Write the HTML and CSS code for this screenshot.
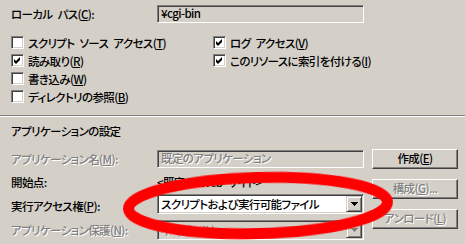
FILE: index.html
```html
<!DOCTYPE html>
<html lang="ja">
<head>
<meta charset="utf-8">
<link rel="stylesheet" href="styles.css">
</head>
<body>
<div class="page">
  <div class="path-row">
    <span class="label">ローカル パス(<u>C</u>):</span>
    <div class="field">¥cgi-bin</div>
  </div>

  <div class="checks">
    <div class="check"><span class="box"></span><span>スクリプト ソース アクセス(<u>T</u>)</span></div>
    <div class="check"><span class="box"><svg viewBox="0 0 11 11" class="tick"><path d="M2 4 L4 6 L8 2 L8 5 L4 9 L2 7 Z"/></svg></span><span>ログ アクセス(<u>V</u>)</span></div>
    <div class="check"><span class="box"><svg viewBox="0 0 11 11" class="tick"><path d="M2 4 L4 6 L8 2 L8 5 L4 9 L2 7 Z"/></svg></span><span>読み取り(<u>R</u>)</span></div>
    <div class="check"><span class="box"><svg viewBox="0 0 11 11" class="tick"><path d="M2 4 L4 6 L8 2 L8 5 L4 9 L2 7 Z"/></svg></span><span>このリソースに索引を付ける(<u>I</u>)</span></div>
    <div class="check"><span class="box"></span><span>書き込み(<u>W</u>)</span></div>
    <div class="check empty"></div>
    <div class="check"><span class="box"></span><span>ディレクトリの参照(<u>B</u>)</span></div>
  </div>

  <div class="separator"></div>

  <div class="heading">アプリケーションの設定</div>

  <div class="app">
    <div class="rows">
      <div class="row row-a">
        <span class="label disabled">アプリケーション名(<u>M</u>):</span>
        <div class="field disabled">既定のアプリケーション</div>
      </div>
      <div class="row row-b">
        <span class="label">開始点:</span>
        <span class="value">&lt;既定の Web サイト&gt;</span>
      </div>
      <div class="row row-c">
        <span class="label shift">実行アクセス権(<u>P</u>):</span>
        <div class="combo">
          <span class="combo-text">スクリプトおよび実行可能ファイル</span>
          <span class="arrow"><svg viewBox="0 0 7 4" class="tri"><path d="M0 0 H7 L3.5 4 Z"/></svg></span>
        </div>
      </div>
      <div class="row row-d">
        <span class="label disabled">アプリケーション保護(<u>N</u>):</span>
        <div class="combo off">
          <span class="combo-text disabled">中 (プール)</span>
          <span class="arrow"><svg viewBox="0 0 7 4" class="tri off-tri"><path d="M0 0 H7 L3.5 4 Z"/></svg></span>
        </div>
      </div>
    </div>
    <div class="buttons">
      <div class="btn">作成(<u>E</u>)</div>
      <div class="btn disabled">構成(<u>G</u>)...</div>
      <div class="btn disabled">アンロード(<u>L</u>)</div>
    </div>
  </div>

  <svg class="mark" viewBox="0 0 465 244" width="465" height="244">
    <defs>
      <filter id="soft" x="-5%" y="-20%" width="110%" height="140%">
        <feGaussianBlur stdDeviation="0.6"/>
      </filter>
    </defs>
    <ellipse cx="258" cy="205.5" rx="129.5" ry="28" fill="none" stroke="#ff0000" stroke-width="11" transform="rotate(-1.5 258 205.5)" filter="url(#soft)"/>
  </svg>
</div>
</body>
</html>
```

FILE: styles.css
```css
html, body {
  margin: 0;
  padding: 0;
}
body {
  background: #d4d0c8;
  font-family: "Noto Sans CJK JP", "Noto Sans", sans-serif;
  font-size: 11.5px;
  font-weight: 500;
  letter-spacing: -0.6px;
  word-spacing: 3px;
  color: #000;
  font-feature-settings: "palt";
}
.page {
  position: relative;
  width: 465px;
  height: 244px;
  overflow: hidden;
}
u {
  text-decoration: underline;
  text-underline-offset: 1px;
}
.label {
  width: 146px;
  flex: none;
  white-space: nowrap;
  line-height: 14px;
}
.disabled {
  color: #808080;
  text-shadow: 1px 1px 0 #fff;
}
.path-row {
  display: flex;
  align-items: center;
  padding: 5px 0 0 11px;
  height: 18px;
}
.field {
  box-sizing: border-box;
  width: 207px;
  height: 18px;
  border: 1px solid;
  border-color: #808080 #fff #fff #808080;
  box-shadow: inset 1px 1px 0 #404040, inset -1px -1px 0 #d4d0c8;
  padding: 0 3px;
  line-height: 15px;
  white-space: nowrap;
  overflow: hidden;
}
.checks {
  display: grid;
  grid-template-columns: 202px auto;
  grid-auto-rows: 18px;
  margin-top: 11px;
  padding-left: 11px;
}
.check {
  display: flex;
  align-items: flex-start;
  gap: 4px;
  white-space: nowrap;
  line-height: 18px;
}
.box {
  box-sizing: border-box;
  flex: none;
  width: 13px;
  height: 13px;
  margin-top: 2px;
  background: #fff;
  border: 1px solid;
  border-color: #808080 #fff #fff #808080;
  box-shadow: inset 1px 1px 0 #404040, inset -1px -1px 0 #d4d0c8;
  display: flex;
}
.tick {
  width: 11px;
  height: 11px;
  fill: #000;
}
.separator {
  margin-top: 9px;
  height: 0;
  border-top: 1px solid #808080;
  border-bottom: 1px solid #fff;
}
.heading {
  margin-top: 7px;
  padding-left: 11px;
  line-height: 14px;
}
.app {
  display: flex;
  margin-top: 11px;
  padding-left: 11px;
}
.rows {
  display: flex;
  flex-direction: column;
}
.row {
  display: flex;
  align-items: center;
}
.row-a { height: 18px; margin-top: 1px; }
.row-b { height: 18px; margin-top: 5px; }
.row-c { height: 20px; margin-top: 3px; }
.row-d { height: 20px; margin-top: 6px; }
.shift { padding-top: 3px; }
.value {
  white-space: nowrap;
  line-height: 14px;
}
.combo {
  box-sizing: border-box;
  width: 207px;
  height: 20px;
  border: 1px solid;
  border-color: #808080 #fff #fff #808080;
  box-shadow: inset 1px 1px 0 #404040, inset -1px -1px 0 #d4d0c8;
  background: #fff;
  display: flex;
  align-items: center;
  padding: 1px 1px 1px 3px;
}
.combo.off {
  background: #d4d0c8;
}
.combo-text {
  flex: 1;
  white-space: nowrap;
  line-height: 16px;
}
.arrow {
  box-sizing: border-box;
  width: 16px;
  height: 16px;
  background: #d4d0c8;
  border: 1px solid;
  border-color: #d4d0c8 #404040 #404040 #d4d0c8;
  box-shadow: inset 1px 1px 0 #fff, inset -1px -1px 0 #808080;
  display: flex;
  align-items: center;
  justify-content: center;
}
.tri {
  width: 7px;
  height: 4px;
  fill: #000;
  shape-rendering: crispEdges;
}
.off-tri {
  fill: #808080;
}
.buttons {
  display: flex;
  flex-direction: column;
  gap: 10px;
  margin-left: 8px;
}
.btn {
  box-sizing: border-box;
  width: 86px;
  height: 20px;
  border: 1px solid;
  border-color: #fff #404040 #404040 #fff;
  box-shadow: inset -1px -1px 0 #808080;
  text-align: center;
  line-height: 17px;
  white-space: nowrap;
}
.mark {
  position: absolute;
  left: 0;
  top: 0;
  pointer-events: none;
}
```
